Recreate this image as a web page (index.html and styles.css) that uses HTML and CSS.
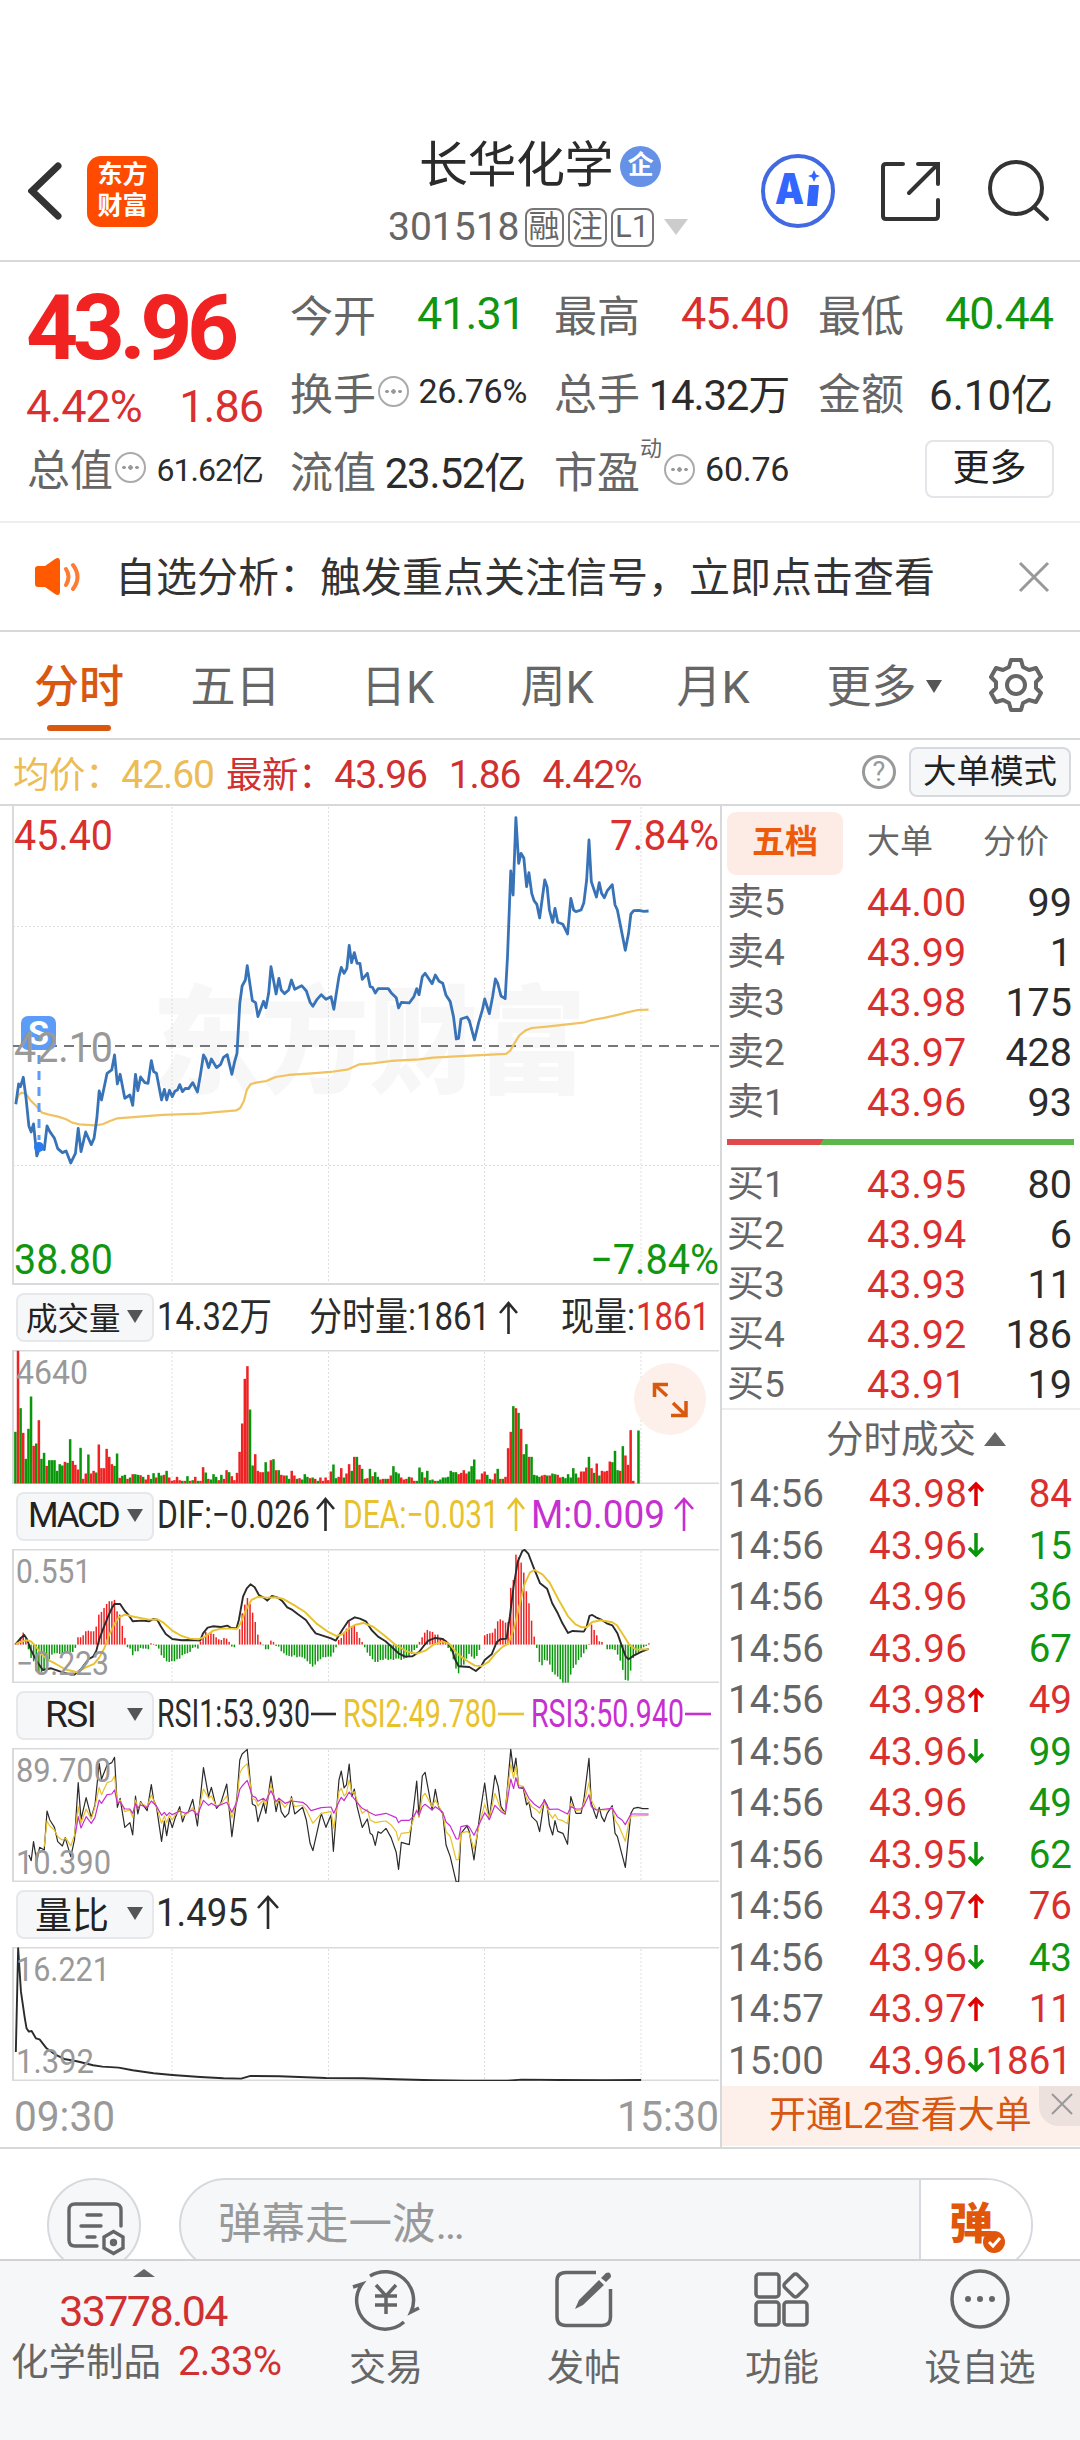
FILE: index.html
```
<!DOCTYPE html>
<html lang="zh-CN">
<head>
  <meta charset="UTF-8">
  <title>长华化学 301518</title>
  <link rel="stylesheet" href="styles.css">
</head>
<body>
  <div class="page">
    <header class="topbar">
      <div class="topbar-left">
        <svg class="back" width="34" height="58" viewBox="0 0 34 58"><path d="M30 4 L4 29 L30 54"/></svg>
        <div class="logo"><span>东方</span><span>财富</span></div>
      </div>
      <div class="topbar-title">
        <div class="name">长华化学<span class="badge-qi">企</span></div>
        <div class="code">301518<i class="tag">融</i><i class="tag">注</i><i class="tag">L1</i><b class="tri-down"></b></div>
      </div>
      <div class="topbar-right">
        <svg class="ai" width="74" height="74" viewBox="0 0 74 74">
          <circle cx="37" cy="37" r="35"/>
          <text x="14" y="50" textLength="29" lengthAdjust="spacingAndGlyphs">A</text>
          <path d="M48 31 h10 l-2 21 h-10z"/>
          <path d="M53 16 l2 4.500 l4 1.500 l-4 1.500 l-2 4.500 l-2 -4.500 l-4 -1.500 l4 -1.500z"/>
        </svg>
        <svg class="line-icon share" width="60" height="60" viewBox="0 0 60 60"><path d="M22 2 H5 Q2 2 2 5 V54 Q2 57 5 57 H54 Q57 57 57 54 V38 M37 2 H57 V22 M57 2 L28 31"/></svg>
        <svg class="line-icon" width="62" height="62" viewBox="0 0 62 62"><circle cx="29" cy="28" r="26"/><path d="M47 47 L60 59"/></svg>
      </div>
    </header>

    <section class="quote">
      <div class="q-main">
        <div class="price">43.96</div>
        <div class="change"><span>4.42%</span><span>1.86</span></div>
        <div class="cell cap"><label>总值</label><i class="dots"></i><span class="v sm">61.62亿</span></div>
      </div>
      <div class="q-col c1">
        <div class="cell"><label>今开</label><span class="v lg green">41.31</span></div>
        <div class="cell"><label>换手</label><i class="dots"></i><span class="v md">26.76%</span></div>
        <div class="cell"><label>流值</label><span class="v">23.52亿</span></div>
      </div>
      <div class="q-col c2">
        <div class="cell"><label>最高</label><span class="v lg red">45.40</span></div>
        <div class="cell"><label>总手</label><span class="v">14.32万</span></div>
        <div class="cell"><label>市盈</label><sup>动</sup><i class="dots"></i><span class="v md">60.76</span></div>
      </div>
      <div class="q-col c3">
        <div class="cell"><label>最低</label><span class="v lg green">40.44</span></div>
        <div class="cell"><label>金额</label><span class="v wide">6.10亿</span></div>
        <div class="cell"><button class="more">更多</button></div>
      </div>
    </section>

    <section class="notice">
      <svg width="48" height="40" viewBox="0 0 48 40">
        <path class="horn" d="M1 12 Q1 9 4 9 H11 L21 2 Q26 -1 26 5 V34 Q26 40 21 37 L11 30 H4 Q1 30 1 27z"/>
        <path class="wave" d="M32 12 Q37 20 32 28 M39 8 Q48 20 39 32"/>
      </svg>
      <span>自选分析：触发重点关注信号，立即点击查看</span>
      <svg class="close" width="32" height="32" viewBox="0 0 32 32"><path d="M2 2 L30 30 M30 2 L2 30"/></svg>
    </section>

    <nav class="tabs">
      <a class="on">分时</a><a>五日</a><a>日K</a><a>周K</a><a>月K</a><a>更多<b></b></a>
      <svg class="gear" width="54" height="54" viewBox="0 0 54 54">
        <path d="M22 2 H32 L34 9 L40 12 L47 10 L52 19 L47 24 V30 L52 35 L47 44 L40 42 L34 45 L32 52 H22 L20 45 L14 42 L7 44 L2 35 L7 30 V24 L2 19 L7 10 L14 12 L20 9z"/>
        <circle cx="27" cy="27" r="9"/>
      </svg>
    </nav>

    <div class="infobar">
      <span class="avg">均价：<em>42.60</em></span>
      <span class="latest">最新：<em>43.96</em><em>1.86</em><em>4.42%</em></span>
      <i class="help">?</i>
      <button class="mode">大单模式</button>
    </div>

    <main class="board">
      <div class="charts">
        <svg class="main-chart" width="720" height="480" viewBox="0 0 720 480">
          <text class="watermark" x="152" y="279" textLength="434" lengthAdjust="spacingAndGlyphs">东方财富</text>
          <path class="frame" d="M13 0 V480 M13 479 H719"/>
          <path class="grid" d="M172 2 V479 M328.500 2 V479 M484.500 2 V479 M641 2 V479 M13 121.500 H719 M13 360.500 H719"/>
          <path class="base" d="M13 241 H719"/>
          <g transform="translate(0 -15) scale(.4656 .3333)">
            <polyline class="avg-line" points="34,938 40,915 46,908 56,912 66,932 78,948 90,968 105,974 125,980 142,988 155,998 170,1003 205,1006 222,1002 235,994 252,985 300,980 350,975 430,971 470,966 508,961 516,954 524,932 530,900 538,883 550,878 572,873 592,861 620,855 670,850 710,846 748,838 772,823 800,820 840,813 900,808 930,803 1000,798 1087,792 1096,782 1104,762 1115,737 1128,722 1142,714 1180,709 1256,697 1272,690 1300,683 1322,676 1345,668 1370,660 1393,659"/>
            <polyline class="price-line" points="34,943 40,882 44,890 50,862 56,925 62,1008 67,1026 72,1002 79,1098 86,1070 95,1079 101,1008 107,1025 117,1045 124,1076 134,1088 142,1083 152,1119 162,1090 168,1015 174,1085 184,1026 196,1064 202,1045 208,985 213,903 218,930 230,850 240,840 246,795 252,882 258,853 268,925 279,915 285,946 291,853 296,902 302,861 311,878 318,880 325,812 330,845 336,850 347,930 353,898 358,930 364,901 370,920 376,903 381,900 386,884 392,905 398,895 405,896 414,878 424,906 431,850 437,795 442,806 448,833 454,807 465,833 474,823 480,802 488,794 498,853 504,815 509,790 515,640 520,588 527,570 531,527 542,632 549,638 554,680 566,634 571,653 577,610 582,530 593,612 599,565 604,600 611,611 620,600 626,570 633,598 648,587 658,603 666,637 672,649 681,628 690,614 700,628 711,620 717,658 728,560 733,532 739,550 745,535 750,466 755,518 761,488 767,520 773,520 778,568 789,550 795,590 800,592 806,609 812,596 834,596 840,608 851,623 856,654 862,637 879,639 889,620 895,596 900,614 907,560 913,550 928,581 935,555 943,574 951,580 958,616 967,635 974,680 980,747 985,745 990,687 1003,681 1008,692 1019,750 1028,698 1036,660 1041,627 1051,671 1058,620 1064,567 1069,580 1076,618 1085,626 1090,500 1097,243 1102,315 1108,83 1114,220 1119,190 1125,204 1131,290 1136,248 1142,310 1147,332 1153,343 1159,384 1170,270 1175,290 1180,360 1187,397 1192,355 1198,397 1209,403 1219,432 1226,325 1232,360 1237,365 1248,360 1254,338 1260,270 1265,150 1270,275 1276,300 1281,321 1287,278 1292,310 1298,323 1304,303 1315,284 1321,345 1326,360 1343,481 1350,430 1355,372 1361,362 1372,361 1383,364 1393,363"/>
          </g>
          <rect class="s-tag" x="21" y="211" width="35" height="34" rx="7"/>
          <text class="s-letter" x="28" y="240">S</text>
          <path class="s-drop" d="M39 250 V335"/>
          <circle class="s-dot" cx="39" cy="342" r="5"/>
          <text class="lbl red" x="14" y="45" textLength="99" lengthAdjust="spacingAndGlyphs">45.40</text>
          <text class="lbl red" x="610" y="45" textLength="109" lengthAdjust="spacingAndGlyphs">7.84%</text>
          <text class="lbl gray" x="14" y="257" textLength="99" lengthAdjust="spacingAndGlyphs">42.10</text>
          <text class="lbl green" x="14" y="469" textLength="99" lengthAdjust="spacingAndGlyphs">38.80</text>
          <text class="lbl green" x="590" y="469" textLength="129" lengthAdjust="spacingAndGlyphs">−7.84%</text>
        </svg>

        <div class="pane">
          <div class="pane-head">
            <button class="vol">成交量<b></b></button>
            <svg width="567" height="65" viewBox="153 0 567 65">
              <text class="leg" x="157" y="45" textLength="115" lengthAdjust="spacingAndGlyphs">14.32万</text>
              <text class="leg" x="309" y="45" textLength="181" lengthAdjust="spacingAndGlyphs">分时量:1861</text>
              <path class="arrow" d="M508.500 49 V19 M500 28 L508.500 18 L517 28"/>
              <text class="leg" x="561" y="45" textLength="74" lengthAdjust="spacingAndGlyphs">现量:</text>
              <text class="leg red" x="636" y="45" textLength="74" lengthAdjust="spacingAndGlyphs">1861</text>
            </svg>
          </div>
          <svg width="720" height="134" viewBox="0 0 720 134">
            <path class="frame" d="M719 .500 H13 V133.500 H719"/>
            <path class="grid" d="M172 2 V133 M328.500 2 V133 M484.500 2 V133 M641 2 V133"/>
            <g id="volBars"></g>
            <text class="axis" x="16" y="34" textLength="72" lengthAdjust="spacingAndGlyphs">4640</text>
            <circle class="zoom-bg" cx="670" cy="49" r="36"/>
            <path class="zoom-ic" d="M654.500 47 V34.500 H668 M654.500 34.500 L667 46 M671 65.500 H686 V51 M686 65.500 L673 53"/>
          </svg>
        </div>

        <div class="pane">
          <div class="pane-head">
            <button class="macd">MACD<b></b></button>
            <svg width="567" height="65" viewBox="153 0 567 65">
              <text class="leg" x="157" y="44" textLength="153" lengthAdjust="spacingAndGlyphs">DIF:−0.026</text>
              <path class="arrow" d="M325.500 47 V16 M317 25 L325.500 15 L334 25"/>
              <text class="leg yellow" x="343" y="44" textLength="156" lengthAdjust="spacingAndGlyphs">DEA:−0.031</text>
              <path class="arrow yl" d="M516 47 V16 M508 25 L516 15 L524 25"/>
              <text class="leg purple" x="531" y="44" textLength="134" lengthAdjust="spacingAndGlyphs">M:0.009</text>
              <path class="arrow pl" d="M684 47 V16 M675 25 L684 15 L693 25"/>
            </svg>
          </div>
          <svg width="720" height="134" viewBox="0 0 720 134">
            <path class="frame" d="M719 .500 H13 V133.500 H719"/>
            <path class="grid" d="M172 2 V133 M328.500 2 V133 M484.500 2 V133 M641 2 V133"/>
            <g id="macdBars"></g>
            <g transform="translate(0 -269) scale(.4656 .3333)">
              <polyline class="dark-line w2" points="34,1092 45,1074 52,1065 58,1078 66,1108 78,1142 92,1170 110,1165 130,1175 152,1184 160,1184 175,1166 190,1138 200,1130 207,1112 213,1078 222,1045 232,1010 240,985 246,972 258,972 268,993 275,1003 285,1024 305,1022 320,1024 330,1017 338,1020 345,1038 356,1062 370,1077 390,1081 410,1080 430,1082 436,1060 446,1043 457,1039 475,1041 488,1037 497,1044 508,1045 513,1020 522,950 530,925 538,913 547,922 556,945 566,953 574,962 584,948 597,953 606,963 617,982 628,990 640,1003 657,1020 668,1042 678,1060 693,1067 711,1075 721,1082 735,1050 748,1023 762,1012 773,1016 786,1024 798,1050 812,1070 828,1084 842,1102 856,1120 870,1130 886,1129 900,1116 910,1098 920,1082 935,1074 951,1077 962,1090 970,1106 978,1140 985,1159 1008,1161 1022,1173 1033,1160 1041,1140 1056,1123 1067,1086 1075,1078 1088,1076 1095,1010 1103,920 1112,845 1122,813 1127,810 1135,822 1146,862 1160,910 1175,926 1186,970 1198,1000 1208,1030 1220,1059 1230,1053 1254,1055 1260,1040 1266,1008 1272,1005 1280,1012 1290,1018 1303,1030 1315,1036 1326,1060 1336,1100 1344,1130 1350,1138 1362,1126 1378,1115 1393,1107"/>
              <polyline class="yellow-line w2" points="34,1092 46,1085 56,1081 66,1084 75,1096 90,1124 103,1140 120,1152 140,1168 165,1177 182,1164 202,1152 213,1133 224,1105 235,1063 245,1034 255,1012 268,1004 290,1011 320,1019 338,1018 350,1027 370,1052 390,1068 408,1076 426,1078 440,1070 458,1052 475,1046 510,1046 518,1026 528,990 540,960 554,951 575,953 590,952 607,956 630,974 655,996 680,1031 705,1056 722,1068 735,1063 750,1045 762,1035 780,1029 800,1039 825,1066 850,1095 875,1115 895,1121 915,1111 930,1095 950,1084 965,1092 980,1118 1000,1140 1020,1157 1035,1158 1050,1145 1065,1119 1080,1100 1092,1091 1104,1045 1115,980 1126,915 1138,878 1148,870 1165,883 1180,907 1200,960 1220,1009 1236,1033 1250,1042 1260,1042 1272,1026 1290,1021 1315,1027 1325,1036 1340,1068 1352,1095 1366,1109 1393,1108"/>
            </g>
            <text class="axis" x="16" y="34" textLength="75" lengthAdjust="spacingAndGlyphs">0.551</text>
            <text class="axis" x="16" y="126" textLength="93" lengthAdjust="spacingAndGlyphs">−0.223</text>
          </svg>
        </div>

        <div class="pane">
          <div class="pane-head">
            <button class="rsi">RSI<b></b></button>
            <svg width="567" height="65" viewBox="153 0 567 65">
              <text class="leg" x="157" y="44" textLength="153" lengthAdjust="spacingAndGlyphs">RSI1:53.930</text>
              <path class="arrow" d="M311 31 H336"/>
              <text class="leg yellow" x="343" y="44" textLength="154" lengthAdjust="spacingAndGlyphs">RSI2:49.780</text>
              <path class="arrow yl" d="M498 31 H524"/>
              <text class="leg purple" x="531" y="44" textLength="153" lengthAdjust="spacingAndGlyphs">RSI3:50.940</text>
              <path class="arrow pl" d="M685 31 H711"/>
            </svg>
          </div>
          <svg width="720" height="134" viewBox="0 0 720 134">
            <path class="frame" d="M719 .500 H13 V133.500 H719"/>
            <path class="grid" d="M172 2 V133 M328.500 2 V133 M484.500 2 V133 M641 2 V133"/>
            <g transform="translate(0 -58) scale(.4656 .3333)">
              <polyline class="dark-line" points="62,495 67,512 72,455 79,515 85,472 95,480 101,363 107,390 117,412 124,455 134,468 140,443 152,500 160,450 168,278 174,388 185,323 196,382 204,345 213,220 218,268 230,225 240,218 246,202 252,352 258,325 268,412 279,398 285,435 291,318 296,372 302,335 316,362 325,284 330,330 336,350 347,454 353,393 358,437 364,385 370,413 376,385 386,350 392,396 398,372 404,368 414,328 424,408 437,233 448,320 454,292 465,355 474,340 487,282 498,440 509,320 515,210 520,192 531,178 542,342 549,348 554,395 566,339 571,370 582,258 593,365 599,325 604,365 612,382 620,370 626,320 633,372 650,352 658,390 666,460 672,482 690,370 700,412 711,375 716,484 728,270 733,243 739,294 744,285 750,222 756,320 761,297 767,350 778,412 789,387 795,430 800,435 806,466 812,425 818,430 829,415 840,443 851,487 856,538 862,457 879,464 895,273 900,380 907,258 913,247 928,360 935,298 942,350 951,372 958,465 967,500 980,577 985,575 990,430 1003,408 1008,425 1018,510 1030,380 1041,279 1051,388 1063,256 1070,290 1076,350 1085,370 1090,290 1097,178 1103,245 1108,204 1114,293 1124,295 1131,345 1136,335 1142,380 1153,395 1159,425 1169,329 1175,345 1180,405 1187,435 1192,392 1198,424 1209,430 1219,463 1226,320 1237,370 1248,370 1254,330 1265,205 1270,340 1281,385 1287,352 1292,380 1298,395 1304,370 1315,347 1321,430 1326,440 1343,532 1355,370 1361,355 1370,352 1380,356 1393,356"/>
              <polyline class="yellow-line" points="95,470 101,393 107,408 117,420 124,440 134,450 142,445 152,468 160,435 168,350 174,400 185,357 196,387 204,350 213,292 218,314 230,278 240,273 246,258 252,340 258,330 268,365 279,360 285,382 291,330 296,355 302,338 316,350 325,315 336,350 347,400 353,378 358,398 364,375 370,390 376,375 386,360 392,380 404,368 414,353 424,378 437,297 448,325 454,318 465,350 474,342 487,318 498,384 509,330 515,250 520,236 531,221 542,325 549,330 554,348 566,330 571,345 582,284 593,345 599,328 612,352 626,325 633,350 650,345 658,360 672,400 690,370 711,365 717,416 728,305 733,295 739,318 744,310 750,270 756,310 761,305 767,332 778,370 789,358 795,390 806,398 818,395 829,393 840,405 851,425 856,452 862,430 879,427 895,358 900,382 907,320 913,310 928,350 935,330 951,370 958,425 967,440 980,510 985,508 990,430 1003,424 1008,430 1018,478 1030,400 1041,343 1051,384 1063,310 1076,360 1085,370 1090,300 1097,222 1103,265 1108,228 1114,285 1124,290 1131,325 1142,350 1153,360 1159,370 1169,335 1180,370 1187,385 1192,373 1198,388 1209,392 1219,401 1226,340 1237,362 1248,360 1254,340 1265,278 1270,330 1281,360 1304,360 1315,352 1321,390 1330,410 1343,454 1350,400 1355,378 1393,376"/>
              <polyline class="purple-line" points="162,432 168,380 174,414 185,380 196,400 204,382 213,330 218,340 230,314 240,312 246,300 252,340 258,335 268,357 279,357 285,370 291,340 296,355 302,345 316,353 325,333 336,348 347,376 353,367 358,377 364,368 370,374 386,363 398,370 414,360 424,375 437,331 448,346 454,340 465,350 487,337 498,367 509,335 515,298 520,288 531,271 542,318 549,322 554,334 566,325 571,333 582,302 593,335 599,325 612,340 626,333 650,337 658,345 668,362 690,353 711,351 717,370 728,335 733,322 739,332 750,306 767,338 778,355 795,368 806,376 829,370 851,383 856,398 862,391 879,391 889,378 895,362 900,376 907,350 913,343 928,360 935,350 951,367 958,396 967,408 980,447 985,447 990,410 1003,406 1008,412 1018,436 1030,400 1041,368 1051,389 1063,346 1076,365 1085,373 1090,330 1097,267 1103,296 1108,263 1114,293 1124,292 1136,325 1147,342 1159,354 1169,332 1180,358 1198,357 1219,372 1226,350 1237,357 1248,357 1254,348 1265,314 1270,350 1281,360 1315,355 1326,380 1336,390 1343,404 1355,372 1393,372"/>
            </g>
            <text class="axis" x="16" y="34" textLength="95" lengthAdjust="spacingAndGlyphs">89.700</text>
            <text class="axis" x="16" y="126" textLength="95" lengthAdjust="spacingAndGlyphs">10.390</text>
          </svg>
        </div>

        <div class="pane">
          <div class="pane-head">
            <button class="ratio-btn">量比<b></b></button>
            <svg width="567" height="65" viewBox="153 0 567 65">
              <text class="leg" x="156" y="44" textLength="92" lengthAdjust="spacingAndGlyphs">1.495</text>
              <path class="arrow" d="M268 47 V16 M258 26 L268 15 L278 26"/>
            </svg>
          </div>
          <svg width="720" height="134" viewBox="0 0 720 134">
            <path class="frame" d="M719 .500 H13 V133.500 H719"/>
            <path class="grid" d="M172 2 V133 M328.500 2 V133 M484.500 2 V133 M641 2 V133"/>
            <g transform="translate(0 -257) scale(.4656 .3333)">
              <polyline class="dark-line w2" points="34,1086 39,775 45,905 53,982 57,1015 62,1025 68,1023 77,1045 85,1048 100,1075 120,1095 138,1107 165,1114 200,1126 220,1130 255,1133 285,1141 330,1150 370,1155 430,1161 480,1165 518,1166 538,1158 600,1159 700,1164 780,1165 850,1168 930,1171 1000,1172 1090,1172 1120,1169 1200,1170 1300,1171 1377,1170"/>
            </g>
            <text class="axis" x="16" y="34" textLength="94" lengthAdjust="spacingAndGlyphs">16.221</text>
            <text class="axis" x="16" y="126" textLength="78" lengthAdjust="spacingAndGlyphs">1.392</text>
          </svg>
        </div>

        <svg class="times" width="720" height="66" viewBox="0 0 720 66">
          <text class="lbl gray" x="14" y="50" textLength="101" lengthAdjust="spacingAndGlyphs">09:30</text>
          <text class="lbl gray" x="617" y="50" textLength="102" lengthAdjust="spacingAndGlyphs">15:30</text>
        </svg>
      </div>

      <aside class="side">
        <div class="side-tabs"><span class="on">五档</span><span>大单</span><span>分价</span></div>
        <ul class="depth">
          <li><span>卖5</span><b>44.00</b><em>99</em></li>
          <li><span>卖4</span><b>43.99</b><em>1</em></li>
          <li><span>卖3</span><b>43.98</b><em>175</em></li>
          <li><span>卖2</span><b>43.97</b><em>428</em></li>
          <li><span>卖1</span><b>43.96</b><em>93</em></li>
        </ul>
        <div class="ratio"></div>
        <ul class="depth">
          <li><span>买1</span><b>43.95</b><em>80</em></li>
          <li><span>买2</span><b>43.94</b><em>6</em></li>
          <li><span>买3</span><b>43.93</b><em>11</em></li>
          <li><span>买4</span><b>43.92</b><em>186</em></li>
          <li><span>买5</span><b>43.91</b><em>19</em></li>
        </ul>
        <div class="ticks-head">分时成交<b></b></div>
        <ul class="ticks" id="ticks"></ul>
        <div class="l2">开通L2查看大单
          <span class="l2-close"><svg width="22" height="22" viewBox="0 0 22 22"><path d="M1 1 L21 21 M21 1 L1 21"/></svg></span>
        </div>
      </aside>
    </main>

    <section class="barrage">
      <div class="round">
        <svg width="60" height="56" viewBox="0 0 60 56">
          <path d="M54 24 V8 Q54 2 48 2 H8 Q2 2 2 8 V38 Q2 44 8 44 H30 M20 13 H34 M14 24 H34 M20 35 H28"/>
          <path d="M46.500 29.500 L56 35 V46 L46.500 51.500 L37 46 V35z"/><circle cx="46.500" cy="40.500" r="2"/>
        </svg>
      </div>
      <div class="input"><span>弹幕走一波…</span>
        <div class="dan">弹<svg width="22" height="22" viewBox="0 0 22 22"><circle cx="11" cy="11" r="11"/><path d="M6 11 L10 15 L17 7"/></svg></div>
      </div>
    </section>

    <footer class="bottom">
      <div class="index">
        <b></b>
        <div class="idx">33778.04</div>
        <div class="sector">化学制品<em>2.33%</em></div>
      </div>
      <div class="item i1">
        <svg width="70" height="62" viewBox="0 0 70 62">
          <path d="M19 7 A28.500 28.500 0 0 1 60 43 L68 39 M53 53 A28.500 28.500 0 0 1 11 15 L2 18"/>
          <path d="M25 16 L35 27 L45 16 M24 27 H46 M24 36 H46 M35 27 V45"/>
        </svg>交易</div>
      <div class="item i2">
        <svg width="60" height="62" viewBox="0 0 60 62">
          <path d="M42 3.500 H12 Q3 3.500 3 12 V48 Q3 56.500 12 56.500 H48 Q56.500 56.500 56.500 48 V20"/>
          <path class="fill" d="M21 40 L25 31 L45 11 L50 16 L29 36z M47 9 L52 4 Q57 2 57 8 L52 13z"/>
        </svg>发帖</div>
      <div class="item i3">
        <svg width="60" height="62" viewBox="0 0 60 62">
          <rect x="4" y="5" width="23" height="23" rx="3"/><rect x="4" y="33" width="23" height="23" rx="3"/><rect x="32" y="33" width="23" height="23" rx="3"/>
          <rect x="34.500" y="7.500" width="18" height="18" rx="3" transform="rotate(45 43.500 16.500)"/>
        </svg>功能</div>
      <div class="item i4">
        <svg width="60" height="62" viewBox="0 0 60 62">
          <circle cx="30" cy="30" r="28"/>
          <circle class="fill" cx="18" cy="30" r="3"/><circle class="fill" cx="30" cy="30" r="3"/><circle class="fill" cx="42" cy="30" r="3"/>
        </svg>设自选</div>
    </footer>
  </div>
  <script src="charts.js"></script>
</body>
</html>
```
FILE: styles.css
```
* {
  box-sizing: border-box;
}
body {
  margin: 0;
  background: #fff;
  color: #2b2b2b;
  font-family: Roboto, "Noto Sans CJK SC", sans-serif;
}
em, i {
  font-style: normal;
}
button {
  font-family: inherit;
  color: #222;
  padding: 0;
}
ul {
  list-style: none;
  margin: 0;
  padding: 0;
}
svg {
  display: block;
  fill: none;
  flex: none;
}
.page {
  width: 1080px;
  height: 2440px;
  overflow: hidden;
}
.red { color: #d92f2f; fill: #d92f2f; }
.green { color: #119611; fill: #119611; }
.gray { fill: #999; }
.yellow { fill: #e8c22c; }
.purple { fill: #c62fd0; }

/* top bar */
.topbar {
  height: 262px;
  padding-top: 120px;
  border-bottom: 2px solid #d6d8da;
  display: grid;
  grid-template-columns: 380px 320px 380px;
}
.topbar-left {
  display: flex;
  align-items: flex-start;
  padding: 35px 0 0 28px;
}
.back {
  margin-top: 7px;
  stroke: #333;
  stroke-width: 7;
  stroke-linecap: round;
}
.logo {
  width: 71px;
  height: 71px;
  margin: 1px 0 0 25px;
  padding-top: 3px;
  background: #ff4b00;
  border-radius: 14px;
  color: #fff;
  font-size: 25px;
  font-weight: 700;
  line-height: 31px;
  text-align: center;
}
.logo span {
  display: block;
}
.name {
  display: flex;
  align-items: center;
  padding: 4px 0 0 39px;
  height: 88px;
  font-size: 49px;
  line-height: 50px;
  letter-spacing: -.5px;
}
.badge-qi {
  width: 41px;
  height: 41px;
  margin-left: 7px;
  border-radius: 50%;
  background: #6592e6;
  color: #fff;
  font-size: 26px;
  font-weight: 700;
  line-height: 39px;
  text-align: center;
}
.code {
  display: flex;
  align-items: center;
  height: 38px;
  padding-left: 8px;
  color: #666;
  font-size: 39px;
}
.tag {
  width: 39px;
  height: 39px;
  margin-left: 4px;
  border: 2px solid #777;
  border-radius: 8px;
  font-size: 31px;
  line-height: 33px;
  text-align: center;
}
.code .tag:first-of-type { margin-left: 5px; }
.tag:nth-of-type(3) { width: 43px; }
.tri-down {
  margin-left: 10px;
  border: 12px solid transparent;
  border-top: 16px solid #ccc;
  border-bottom: 0;
}
.topbar-right {
  display: flex;
  padding: 34px 0 0 61px;
}
.ai circle {
  stroke: #4169e1;
  stroke-width: 4;
}
.ai text {
  font-family: Inter, sans-serif;
  font-size: 43px;
  font-weight: 900;
  fill: #3366ff;
}
.ai path {
  fill: #3366ff;
}
.line-icon {
  margin: 6px 0 0 46px;
  stroke: #333;
  stroke-width: 4;
  stroke-linecap: round;
  overflow: visible;
}
.share { margin: 8px 0 0 46px; }

/* quote */
.quote {
  height: 261px;
  border-bottom: 2px solid #eee;
  display: grid;
  grid-template-columns: 290px 264px 264px 262px;
  padding-top: 12px;
}
.q-main {
  padding: 4px 27px 0 26px;
}
.price {
  height: 107px;
  color: #f02222;
  font-size: 91px;
  font-weight: 700;
  line-height: 100px;
  letter-spacing: -5.500px;
}
.change {
  display: flex;
  justify-content: space-between;
  height: 44px;
  color: #d92f2f;
  font-size: 45px;
  line-height: 44px;
  letter-spacing: -1px;
}
.cell {
  display: flex;
  align-items: center;
  height: 78px;
  font-size: 43px;
}
.cell label {
  color: #666;
  font-size: 43px;
}
.cap {
  margin: -1px 0 0 1px;
}
.c1 .v, .c2 .v { margin-right: 29px; }
.c3 .v { margin-right: 27px; }
.cell .v {
  margin-left: auto;
  font-size: 42px;
  letter-spacing: -1.200px;
  white-space: nowrap;
}
.cell .lg { font-size: 45px; letter-spacing: -1px; }
.cell .md { font-size: 34px; letter-spacing: -.300px; }
.c1 .md { margin-right: 27px; }
.cell .sm { font-size: 32px; letter-spacing: -1px; }
.cell .wide { letter-spacing: 0; }
.q-main .v { margin-right: 0; }
.dots {
  width: 31px;
  height: 31px;
  margin-left: 2px;
  border: 2px solid #aaa;
  border-radius: 50%;
  background: radial-gradient(circle, #999 2px, transparent 2.500px) center / 7px 7px no-repeat, radial-gradient(circle at 7px 50%, #999 1.500px, transparent 2px), radial-gradient(circle at 20px 50%, #999 1.500px, transparent 2px);
}
.cell sup {
  align-self: flex-start;
  margin-top: 8px;
  color: #666;
  font-size: 22px;
  line-height: 22px;
}
.more {
  width: 129px;
  height: 58px;
  margin-left: 107px;
  border: 2px solid #e3e5e8;
  border-radius: 8px;
  background: #fff;
  font-size: 37px;
  line-height: 50px;
}

/* notice */
.notice {
  display: flex;
  align-items: center;
  height: 109px;
  padding-left: 34px;
  border-bottom: 2px solid #d6d8da;
}
.notice span {
  width: 903px;
  padding: 0 0 5px 33px;
  color: #333;
  font-size: 41px;
}
.horn { fill: #ff5a00; }
.wave { stroke: #ff7a33; stroke-width: 4; stroke-linecap: round; }
.close { stroke: #999; stroke-width: 3; margin-left: 33px; }

/* tabs */
.tabs {
  position: relative;
  height: 108px;
  display: grid;
  grid-template-columns: 158px 155px 169px 150px 162px 180px 70px;
  align-items: center;
  border-bottom: 2px solid #d6d8da;
  color: #666;
  font-size: 45px;
  text-align: center;
}
.tabs a { white-space: nowrap; padding-bottom: 3px; }
.tabs .on { color: #d9580f; font-weight: 500; }
.tabs .on::after {
  content: "";
  position: absolute;
  left: 47px;
  bottom: 7px;
  width: 64px;
  height: 6px;
  border-radius: 3px;
  background: #d9580f;
}
.tabs b {
  display: inline-block;
  margin-left: 9px;
  vertical-align: 10px;
  border: 8px solid transparent;
  border-top: 13px solid #555;
  border-bottom: 0;
}
.gear {
  margin-left: 15px;
  stroke: #666;
  stroke-width: 4;
  stroke-linejoin: round;
}

/* info bar */
.infobar {
  display: flex;
  align-items: center;
  height: 66px;
  padding-left: 13px;
  border-bottom: 2px solid #d6d8da;
  font-size: 36.500px;
  white-space: nowrap;
}
.infobar span { display: flex; align-items: baseline; letter-spacing: -.400px; }
.avg { color: #ecbc55; width: 213px; }
.latest { color: #d03030; width: 636px; }
.latest em { margin-right: 22px; }
.infobar em { font-size: 39px; letter-spacing: -1.100px; }
.help {
  width: 34px;
  height: 34px;
  border: 3px solid #999;
  border-radius: 50%;
  color: #999;
  font-size: 27px;
  line-height: 29px;
  text-align: center;
}
.mode {
  width: 162px;
  height: 50px;
  margin-left: 13px;
  border: 2px solid #d6d9dd;
  border-radius: 8px;
  background: #f6f7f9;
  font-size: 33.500px;
  line-height: 44px;
}

/* charts */
.board {
  display: grid;
  grid-template-columns: 720px 360px;
  height: 1343px;
  border-bottom: 2px solid #d6d8da;
}
.charts { margin-top: -1px; }
.frame { stroke: #d9dadc; stroke-width: 2; }
.grid { stroke: #ddd; stroke-dasharray: 2 2; }
.base { stroke: #777; stroke-width: 2; stroke-dasharray: 10 7; }
.watermark { font-size: 117px; font-weight: 900; fill: #f7f7f7; }
polyline { vector-effect: non-scaling-stroke; stroke-linejoin: round; }
.price-line { stroke: #3873b8; stroke-width: 2.800px; }
.avg-line { stroke: #f0c260; stroke-width: 2.200px; }
.dark-line { stroke: #2b2b2b; stroke-width: 1.200px; }
.yellow-line { stroke: #e8c22c; stroke-width: 1.200px; }
.purple-line { stroke: #c62fd0; stroke-width: 1.200px; }
polyline.w2 { stroke-width: 1.900px; }
.s-tag { fill: #5b9cf8; }
.s-letter { font-size: 34px; font-weight: 700; fill: #fff; }
.s-drop { stroke: #5b9cf8; stroke-width: 3; stroke-dasharray: 9 7; }
.s-dot { fill: #2a7af0; }
.lbl { font-size: 42px; }
.leg { font-size: 39px; fill: #2b2b2b; }
.leg.red { fill: #d92f2f; }
.leg.yellow { fill: #e8c22c; }
.leg.purple { fill: #c62fd0; }
.axis { font-size: 33px; fill: #999; }
.arrow { stroke: #2b2b2b; stroke-width: 2.600; }
.arrow.yl { stroke: #e8c22c; }
.arrow.pl { stroke: #c62fd0; }
.zoom-bg { fill: #fdf0ea; }
.zoom-ic { stroke: #d9580f; stroke-width: 3.500; }
.up { fill: #ee2222; }
.down { fill: #0a960a; }
.pane-head {
  display: flex;
  height: 65px;
}
.pane-head button {
  display: flex;
  align-items: center;
  justify-content: space-between;
  width: 138px;
  height: 49px;
  margin: 8px 0 0 16px;
  padding: 0 9px 3px;
  border: 2px solid #e6e8eb;
  border-radius: 8px;
  background: #f6f7f9;
  white-space: nowrap;
}
.pane-head svg { margin-left: -1px; }
.pane-head .vol { font-size: 31.500px; padding-left: 8px; }
.pane-head .macd { font-size: 35px; letter-spacing: -2.200px; padding-left: 10px; }
.pane-head .rsi { font-size: 37px; padding-left: 27px; letter-spacing: -1.500px; }
.pane-head .ratio-btn { font-size: 37px; padding-left: 17px; }
.pane-head b {
  border: 8px solid transparent;
  border-top: 13px solid #555;
  border-bottom: 0;
}

/* order book */
.side {
  border-left: 2px solid #d6d8da;
  padding-left: 5px;
}
.side-tabs {
  display: flex;
  height: 72px;
  padding-top: 6px;
  color: #666;
  font-size: 33px;
  line-height: 59px;
}
.side-tabs span { width: 116px; height: 63px; text-align: center; }
.side-tabs .on {
  margin-right: -1px;
  border-radius: 9px;
  background: #fdece5;
  color: #ee5a0c;
  font-weight: 700;
}
.depth li, .ticks li {
  display: grid;
  grid-template-columns: 140px 98px 107px;
  align-items: center;
  height: 50px;
  line-height: 50px;
  font-size: 39.500px;
}
.depth span { color: #666; font-size: 37px; }
.depth b, .ticks b { color: #d92f2f; font-weight: 400; white-space: nowrap; }
.depth em, .ticks em { text-align: right; }
.ratio {
  width: 347px;
  height: 6px;
  margin: 11px 0 15px;
  background: linear-gradient(120deg, #e04a4a 83px, #5cb848 84px);
}
.side .ratio + .depth { height: 248px; }
.ticks-head {
  display: flex;
  align-items: center;
  height: 60px;
  margin-left: -5px;
  padding-left: 104px;
  border-top: 2px solid #eee;
  color: #666;
  font-size: 37.500px;
  line-height: 56px;
}
.ticks-head b {
  margin: 0 0 0 8px;
  border: 11px solid transparent;
  border-bottom: 14px solid #666;
  border-top: 0;
}
.ticks li {
  grid-template-columns: 142px 118px 85px;
  height: 51.500px;
  line-height: 51.500px;
  font-size: 38.500px;
}
.ticks span { color: #666; padding-left: 1px; }
.ticks b { display: flex; align-items: center; letter-spacing: .300px; }
.ticks svg { stroke-width: 3.500; }
.ticks em { margin-left: -20px; }
.t-up { stroke: #e00000; }
.t-down { stroke: #0a960a; }
.l2 {
  position: relative;
  height: 60px;
  margin-left: -5px;
  padding-left: 47px;
  background: #fdf0eb;
  color: #d9580f;
  font-size: 37px;
  line-height: 59px;
}
.l2-close {
  position: absolute;
  top: 0;
  right: 0;
  width: 41px;
  height: 40px;
  padding: 7px 0 0 12px;
  border-bottom-left-radius: 20px;
  background: #ece1dd;
  stroke: #999;
  stroke-width: 2;
}

/* barrage input */
.barrage {
  display: flex;
  height: 110px;
  padding: 29px 0 0 47px;
  overflow: hidden;
}
.round {
  flex: none;
  width: 94px;
  height: 94px;
  padding: 22px 0 0 18px;
  border: 2px solid #d6d9dd;
  border-radius: 50%;
  background: #f6f7f9;
}
.round svg { stroke: #666; stroke-width: 3.400; stroke-linecap: round; }
.input {
  display: flex;
  width: 854px;
  height: 94px;
  margin-left: 38px;
  border: 2px solid #d6d9dd;
  border-radius: 47px;
  background: #f6f7f9;
  overflow: hidden;
  color: #999;
  font-size: 43.500px;
  line-height: 90px;
}
.input span { width: 740px; padding-left: 37px; }
.dan {
  position: relative;
  width: 112px;
  padding-left: 28px;
  border-left: 2px solid #d6d9dd;
  background: #fff;
  color: #e0570b;
  font-weight: 900;
}
.dan svg {
  position: absolute;
  left: 62px;
  top: 51px;
}
.dan circle { fill: #e0570b; }
.dan path { stroke: #fff; stroke-width: 3; }

/* bottom bar */
.bottom {
  display: flex;
  height: 183px;
  background: #f6f7f9;
  border-top: 2px solid #d0d2d5;
  color: #666;
}
.index {
  width: 312px;
}
.index b {
  display: block;
  width: 0;
  margin: 8px 0 0 133px;
  border: 11px solid transparent;
  border-bottom: 8px solid #666;
  border-top: 0;
}
.idx {
  width: 286px;
  margin-top: 8px;
  color: #d03030;
  font-size: 43px;
  line-height: 52px;
  letter-spacing: -1.600px;
  text-align: center;
}
.sector {
  display: flex;
  align-items: center;
  padding-left: 11px;
  font-size: 37.500px;
  line-height: 50px;
}
.sector em {
  margin-left: 17px;
  color: #d03030;
  font-size: 40px;
  letter-spacing: -.800px;
}
.item {
  display: flex;
  flex-direction: column;
  align-items: center;
  width: 198px;
  padding-top: 8px;
  font-size: 37px;
  line-height: 76px;
}
.item svg { stroke: #666; stroke-width: 3.500; }
.item .fill { fill: #666; stroke: none; }
.i1 { margin-left: -25px; }
```
FILE: charts.js
```
// Minute volume, positive = up (red), negative = down (green)
const volume = [-155,398,-226,152,-74,-164,-261,113,-120,190,-74,-92,53,-70,-70,-70,-38,-58,-54,65,-62,-133,68,56,42,-107,14,30,-87,30,38,-33,117,46,46,104,80,58,-53,-90,17,-23,-26,14,-18,28,-28,-26,25,-20,12,26,-14,-31,18,-32,-24,26,-38,18,8,10,20,10,-8,8,-22,8,-10,20,-8,8,49,-33,14,-12,-28,-20,10,-26,14,40,-34,22,10,32,95,180,314,352,-222,-54,88,38,34,34,-64,36,70,-73,40,-40,26,24,-24,-14,38,24,-14,16,-12,-28,-20,16,-18,14,-8,18,8,18,10,36,-57,-16,20,46,-18,30,58,-38,80,-80,56,-44,14,16,-44,22,-34,-20,12,14,-14,14,24,-52,-34,-30,18,12,14,-20,18,8,-8,-48,-34,18,-38,-10,-12,8,-8,-12,-18,-18,-20,-38,-34,-34,28,32,40,30,-36,-52,-72,12,12,30,36,-26,-14,12,30,-44,14,-14,20,106,155,-232,226,-212,164,-88,-118,80,-80,-26,-24,-20,24,26,-24,24,-30,-28,26,18,-20,-16,-28,-18,-46,-30,18,36,36,48,-80,46,-32,60,-24,38,36,38,66,-64,-98,-40,38,-112,84,56,160,8,0,-159];

const macd = [4,10,22,36,18,-14,-40,-50,-80,-84,-84,-76,-50,-44,-30,-26,-26,-28,-26,-26,-24,-22,-22,-10,22,22,28,40,42,40,40,54,90,98,110,122,130,130,134,100,90,56,20,-8,-12,-32,-20,-20,-10,-12,-12,-14,4,2,-4,-12,-32,-40,-50,-52,-50,-50,-44,-42,-32,-28,-26,-22,-10,-8,-12,8,20,38,32,34,32,22,16,14,20,18,8,-6,-8,0,46,94,120,140,122,96,68,30,8,-2,-14,-14,12,8,-4,-6,-20,-26,-32,-34,-36,-32,-38,-36,-38,-42,-50,-58,-66,-60,-50,-44,-38,-38,-36,-36,-24,-8,14,20,34,48,70,56,58,38,20,8,-8,-24,-34,-44,-52,-52,-46,-46,-42,-46,-44,-46,-42,-42,-46,-42,-40,-34,-28,-16,-10,8,22,36,44,40,38,30,30,20,18,14,-10,-20,-44,-72,-86,-66,-60,-42,-28,-36,-42,-34,-16,0,28,32,34,36,48,70,76,72,66,68,170,194,270,262,246,216,160,124,72,24,-10,-52,-62,-46,-48,-60,-82,-90,-96,-104,-114,-114,-114,-90,-70,-60,-46,-38,-26,-14,2,60,44,28,10,8,0,-14,-14,-14,-16,-30,-48,-76,-106,-108,-78,-40,-30,-22,-12,-8,-4,4];

function bars(id, data, base, width, signed) {
  let out = "";
  data.forEach((v, i) => {
    const h = Math.abs(v) / 3;
    const x = 15.4 + i * 2.607 - width / 2;
    const y = signed && v < 0 ? base : base - h;
    out += `<rect class="${v > 0 ? "up" : "down"}" x="${x.toFixed(2)}" y="${y.toFixed(2)}" width="${width}" height="${h.toFixed(2)}"/>`;
  });
  document.getElementById(id).innerHTML = out;
}
bars("volBars", volume, 133.5, 2.5, false);
bars("macdBars", macd, 95.6, 1.5, true);

// time, price, direction, lots, lots colour
const ticks = [
  ["14:56", "43.98", "up", 84, "red"],
  ["14:56", "43.96", "down", 15, "green"],
  ["14:56", "43.96", "", 36, "green"],
  ["14:56", "43.96", "", 67, "green"],
  ["14:56", "43.98", "up", 49, "red"],
  ["14:56", "43.96", "down", 99, "green"],
  ["14:56", "43.96", "", 49, "green"],
  ["14:56", "43.95", "down", 62, "green"],
  ["14:56", "43.97", "up", 76, "red"],
  ["14:56", "43.96", "down", 43, "green"],
  ["14:57", "43.97", "up", 11, "red"],
  ["15:00", "43.96", "down", 1861, "red"]
];
const arrows = { up: "M9 25 V3 M2 10 L9 3 L16 10", down: "M9 1 V23 M2 16 L9 23 L16 16" };
document.getElementById("ticks").innerHTML = ticks.map(([t, p, d, n, c]) => `
  <li><span>${t}</span><b>${p}${d ? `<svg class="t-${d}" width="18" height="26"><path d="${arrows[d]}"/></svg>` : ""}</b><em class="${c}">${n}</em></li>`).join("");
```
